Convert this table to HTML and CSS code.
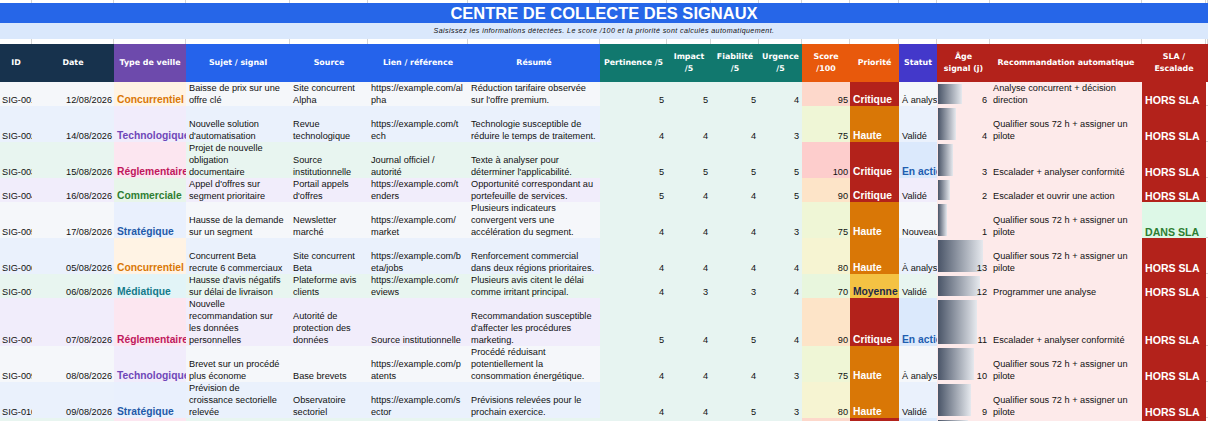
FILE: index.html
```html
<!DOCTYPE html>
<html lang="fr">
<head>
<meta charset="utf-8">
<title>Centre de collecte des signaux</title>
<link rel="stylesheet" href="styles.css">
</head>
<body>
<div class="sheet">
  <div class="row strip top">
    <div class="gl"></div><div class="gl"></div><div class="gl"></div><div class="gl"></div><div class="gl"></div><div class="gl"></div><div class="gl"></div><div class="gl"></div><div class="gl"></div><div class="gl"></div><div class="gl"></div><div class="gl"></div><div class="gl"></div><div class="gl"></div><div class="gl"></div><div class="gl"></div><div class="gl"></div><div class="gl"></div>
  </div>
  <div class="title">CENTRE DE COLLECTE DES SIGNAUX</div>
  <div class="subtitle">Saisissez les informations détectées. Le score /100 et la priorité sont calculés automatiquement.</div>
  <div class="row strip gap">
    <div class="gl"></div><div class="gl"></div><div class="gl"></div><div class="gl"></div><div class="gl"></div><div class="gl"></div><div class="gl"></div><div class="gl"></div><div class="gl"></div><div class="gl"></div><div class="gl"></div><div class="gl"></div><div class="gl"></div><div class="gl"></div><div class="gl"></div><div class="gl"></div><div class="gl"></div><div class="gl"></div>
  </div>

  <div class="row head">
    <div class="h h-navy">ID</div>
    <div class="h h-navy">Date</div>
    <div class="h h-purple">Type de veille</div>
    <div class="h h-blue">Sujet / signal</div>
    <div class="h h-blue">Source</div>
    <div class="h h-blue">Lien / référence</div>
    <div class="h h-blue">Résumé</div>
    <div class="h h-teal">Pertinence /5</div>
    <div class="h h-teal">Impact<br>/5</div>
    <div class="h h-teal">Fiabilité<br>/5</div>
    <div class="h h-teal">Urgence<br>/5</div>
    <div class="h h-orange">Score<br>/100</div>
    <div class="h h-orange">Priorité</div>
    <div class="h h-indigo">Statut</div>
    <div class="h h-red">Âge<br>signal (j)</div>
    <div class="h h-red">Recommandation automatique</div>
    <div class="h h-red">SLA /<br>Escalade</div>
    <div class="h h-red"></div>
  </div>

  <div class="row g h24">
    <div class="c rb id"><span>SIG-001</span></div>
    <div class="c rb r"><span>12/08/2026</span></div>
    <div class="c ty t-conc"><span>Concurrentiel</span></div>
    <div class="c rb"><span>Baisse de prix sur une<br>offre clé</span></div>
    <div class="c rb"><span>Site concurrent<br>Alpha</span></div>
    <div class="c rb"><span>https://example.com/al<br>pha</span></div>
    <div class="c rb"><span>Réduction tarifaire observée<br>sur l'offre premium.</span></div>
    <div class="c num"><span>5</span></div>
    <div class="c num"><span>5</span></div>
    <div class="c num"><span>5</span></div>
    <div class="c num"><span>4</span></div>
    <div class="c sc s95"><span>95</span></div>
    <div class="c pr p-crit"><span>Critique</span></div>
    <div class="c rb"><span>À analyser</span></div>
    <div class="c age" style="background-size:24px calc(100% - 4px)"><span>6</span></div>
    <div class="c rec"><span>Analyse concurrent + décision<br>direction</span></div>
    <div class="c sla hors"><span>HORS SLA</span></div>
    <div class="c fill"></div>
  </div>

  <div class="row b h36">
    <div class="c rb id"><span>SIG-002</span></div>
    <div class="c rb r"><span>14/08/2026</span></div>
    <div class="c ty t-tech"><span>Technologique</span></div>
    <div class="c rb"><span>Nouvelle solution<br>d'automatisation</span></div>
    <div class="c rb"><span>Revue<br>technologique</span></div>
    <div class="c rb"><span>https://example.com/t<br>ech</span></div>
    <div class="c rb"><span>Technologie susceptible de<br>réduire le temps de traitement.</span></div>
    <div class="c num"><span>4</span></div>
    <div class="c num"><span>4</span></div>
    <div class="c num"><span>4</span></div>
    <div class="c num"><span>3</span></div>
    <div class="c sc s75"><span>75</span></div>
    <div class="c pr p-haute"><span>Haute</span></div>
    <div class="c rb"><span>Validé</span></div>
    <div class="c age" style="background-size:18px calc(100% - 4px)"><span>4</span></div>
    <div class="c rec"><span>Qualifier sous 72 h + assigner un<br>pilote</span></div>
    <div class="c sla hors"><span>HORS SLA</span></div>
    <div class="c fill"></div>
  </div>

  <div class="row n h36">
    <div class="c rb id"><span>SIG-003</span></div>
    <div class="c rb r"><span>15/08/2026</span></div>
    <div class="c ty t-reg"><span>Réglementaire</span></div>
    <div class="c rb"><span>Projet de nouvelle<br>obligation<br>documentaire</span></div>
    <div class="c rb"><span>Source<br>institutionnelle</span></div>
    <div class="c rb"><span>Journal officiel /<br>autorité</span></div>
    <div class="c rb"><span>Texte à analyser pour<br>déterminer l'applicabilité.</span></div>
    <div class="c num"><span>5</span></div>
    <div class="c num"><span>5</span></div>
    <div class="c num"><span>5</span></div>
    <div class="c num"><span>5</span></div>
    <div class="c sc s100"><span>100</span></div>
    <div class="c pr p-crit"><span>Critique</span></div>
    <div class="c st-act"><span>En action</span></div>
    <div class="c age" style="background-size:15px calc(100% - 4px)"><span>3</span></div>
    <div class="c rec"><span>Escalader + analyser conformité</span></div>
    <div class="c sla hors"><span>HORS SLA</span></div>
    <div class="c fill"></div>
  </div>

  <div class="row p h24">
    <div class="c rb id"><span>SIG-004</span></div>
    <div class="c rb r"><span>16/08/2026</span></div>
    <div class="c ty t-com"><span>Commerciale</span></div>
    <div class="c rb"><span>Appel d'offres sur<br>segment prioritaire</span></div>
    <div class="c rb"><span>Portail appels<br>d'offres</span></div>
    <div class="c rb"><span>https://example.com/t<br>enders</span></div>
    <div class="c rb"><span>Opportunité correspondant au<br>portefeuille de services.</span></div>
    <div class="c num"><span>5</span></div>
    <div class="c num"><span>4</span></div>
    <div class="c num"><span>4</span></div>
    <div class="c num"><span>5</span></div>
    <div class="c sc s90"><span>90</span></div>
    <div class="c pr p-crit"><span>Critique</span></div>
    <div class="c rb"><span>Validé</span></div>
    <div class="c age" style="background-size:12px calc(100% - 4px)"><span>2</span></div>
    <div class="c rec"><span>Escalader et ouvrir une action</span></div>
    <div class="c sla hors"><span>HORS SLA</span></div>
    <div class="c fill"></div>
  </div>

  <div class="row g h36">
    <div class="c rb id"><span>SIG-005</span></div>
    <div class="c rb r"><span>17/08/2026</span></div>
    <div class="c ty t-str"><span>Stratégique</span></div>
    <div class="c rb"><span>Hausse de la demande<br>sur un segment</span></div>
    <div class="c rb"><span>Newsletter<br>marché</span></div>
    <div class="c rb"><span>https://example.com/<br>market</span></div>
    <div class="c rb"><span>Plusieurs indicateurs<br>convergent vers une<br>accélération du segment.</span></div>
    <div class="c num"><span>4</span></div>
    <div class="c num"><span>4</span></div>
    <div class="c num"><span>4</span></div>
    <div class="c num"><span>3</span></div>
    <div class="c sc s75"><span>75</span></div>
    <div class="c pr p-haute"><span>Haute</span></div>
    <div class="c rb"><span>Nouveau</span></div>
    <div class="c age" style="background-size:9px calc(100% - 4px)"><span>1</span></div>
    <div class="c rec"><span>Qualifier sous 72 h + assigner un<br>pilote</span></div>
    <div class="c sla dans"><span>DANS SLA</span></div>
    <div class="c fill"></div>
  </div>

  <div class="row b h36">
    <div class="c rb id"><span>SIG-006</span></div>
    <div class="c rb r"><span>05/08/2026</span></div>
    <div class="c ty t-conc"><span>Concurrentiel</span></div>
    <div class="c rb"><span>Concurrent Beta<br>recrute 6 commerciaux</span></div>
    <div class="c rb"><span>Site concurrent<br>Beta</span></div>
    <div class="c rb"><span>https://example.com/b<br>eta/jobs</span></div>
    <div class="c rb"><span>Renforcement commercial<br>dans deux régions prioritaires.</span></div>
    <div class="c num"><span>4</span></div>
    <div class="c num"><span>4</span></div>
    <div class="c num"><span>4</span></div>
    <div class="c num"><span>4</span></div>
    <div class="c sc s80"><span>80</span></div>
    <div class="c pr p-haute"><span>Haute</span></div>
    <div class="c rb"><span>À analyser</span></div>
    <div class="c age" style="background-size:45px calc(100% - 4px)"><span>13</span></div>
    <div class="c rec"><span>Qualifier sous 72 h + assigner un<br>pilote</span></div>
    <div class="c sla hors"><span>HORS SLA</span></div>
    <div class="c fill"></div>
  </div>

  <div class="row n h24">
    <div class="c rb id"><span>SIG-007</span></div>
    <div class="c rb r"><span>06/08/2026</span></div>
    <div class="c ty t-med"><span>Médiatique</span></div>
    <div class="c rb"><span>Hausse d'avis négatifs<br>sur délai de livraison</span></div>
    <div class="c rb"><span>Plateforme avis<br>clients</span></div>
    <div class="c rb"><span>https://example.com/r<br>eviews</span></div>
    <div class="c rb"><span>Plusieurs avis citent le délai<br>comme irritant principal.</span></div>
    <div class="c num"><span>4</span></div>
    <div class="c num"><span>3</span></div>
    <div class="c num"><span>3</span></div>
    <div class="c num"><span>4</span></div>
    <div class="c sc s70"><span>70</span></div>
    <div class="c pr p-moy"><span>Moyenne</span></div>
    <div class="c rb"><span>Validé</span></div>
    <div class="c age" style="background-size:42px calc(100% - 4px)"><span>12</span></div>
    <div class="c rec"><span>Programmer une analyse</span></div>
    <div class="c sla hors"><span>HORS SLA</span></div>
    <div class="c fill"></div>
  </div>

  <div class="row p h48">
    <div class="c rb id"><span>SIG-008</span></div>
    <div class="c rb r"><span>07/08/2026</span></div>
    <div class="c ty t-reg"><span>Réglementaire</span></div>
    <div class="c rb"><span>Nouvelle<br>recommandation sur<br>les données<br>personnelles</span></div>
    <div class="c rb"><span>Autorité de<br>protection des<br>données</span></div>
    <div class="c rb"><span>Source institutionnelle</span></div>
    <div class="c rb"><span>Recommandation susceptible<br>d'affecter les procédures<br>marketing.</span></div>
    <div class="c num"><span>5</span></div>
    <div class="c num"><span>4</span></div>
    <div class="c num"><span>5</span></div>
    <div class="c num"><span>4</span></div>
    <div class="c sc s90"><span>90</span></div>
    <div class="c pr p-crit"><span>Critique</span></div>
    <div class="c st-act"><span>En action</span></div>
    <div class="c age" style="background-size:39px calc(100% - 4px)"><span>11</span></div>
    <div class="c rec"><span>Escalader + analyser conformité</span></div>
    <div class="c sla hors"><span>HORS SLA</span></div>
    <div class="c fill"></div>
  </div>

  <div class="row g h36">
    <div class="c rb id"><span>SIG-009</span></div>
    <div class="c rb r"><span>08/08/2026</span></div>
    <div class="c ty t-tech"><span>Technologique</span></div>
    <div class="c rb"><span>Brevet sur un procédé<br>plus économe</span></div>
    <div class="c rb"><span>Base brevets</span></div>
    <div class="c rb"><span>https://example.com/p<br>atents</span></div>
    <div class="c rb"><span>Procédé réduisant<br>potentiellement la<br>consommation énergétique.</span></div>
    <div class="c num"><span>4</span></div>
    <div class="c num"><span>4</span></div>
    <div class="c num"><span>4</span></div>
    <div class="c num"><span>3</span></div>
    <div class="c sc s75"><span>75</span></div>
    <div class="c pr p-haute"><span>Haute</span></div>
    <div class="c rb"><span>À analyser</span></div>
    <div class="c age" style="background-size:36px calc(100% - 4px)"><span>10</span></div>
    <div class="c rec"><span>Qualifier sous 72 h + assigner un<br>pilote</span></div>
    <div class="c sla hors"><span>HORS SLA</span></div>
    <div class="c fill"></div>
  </div>

  <div class="row b h36">
    <div class="c rb id"><span>SIG-010</span></div>
    <div class="c rb r"><span>09/08/2026</span></div>
    <div class="c ty t-str"><span>Stratégique</span></div>
    <div class="c rb"><span>Prévision de<br>croissance sectorielle<br>relevée</span></div>
    <div class="c rb"><span>Observatoire<br>sectoriel</span></div>
    <div class="c rb"><span>https://example.com/s<br>ector</span></div>
    <div class="c rb"><span>Prévisions relevées pour le<br>prochain exercice.</span></div>
    <div class="c num"><span>4</span></div>
    <div class="c num"><span>4</span></div>
    <div class="c num"><span>5</span></div>
    <div class="c num"><span>3</span></div>
    <div class="c sc s80"><span>80</span></div>
    <div class="c pr p-haute"><span>Haute</span></div>
    <div class="c rb"><span>Validé</span></div>
    <div class="c age" style="background-size:33px calc(100% - 4px)"><span>9</span></div>
    <div class="c rec"><span>Qualifier sous 72 h + assigner un<br>pilote</span></div>
    <div class="c sla hors"><span>HORS SLA</span></div>
    <div class="c fill"></div>
  </div>

  <div class="row n h36">
    <div class="c rb id"><span>SIG-011</span></div>
    <div class="c rb r"><span>10/08/2026</span></div>
    <div class="c ty t-reg"><span>Réglementaire</span></div>
    <div class="c rb"><span>Consultation publique<br>sur un projet de norme</span></div>
    <div class="c rb"><span>Source<br>institutionnelle</span></div>
    <div class="c rb"><span>Journal officiel /<br>autorité</span></div>
    <div class="c rb"><span>Norme susceptible d'impacter<br>les offres existantes.</span></div>
    <div class="c num"><span>5</span></div>
    <div class="c num"><span>5</span></div>
    <div class="c num"><span>4</span></div>
    <div class="c num"><span>5</span></div>
    <div class="c sc s95"><span>95</span></div>
    <div class="c pr p-crit"><span>Critique</span></div>
    <div class="c st-act"><span>En action</span></div>
    <div class="c age" style="background-size:30px calc(100% - 4px)"><span>8</span></div>
    <div class="c rec"><span>Escalader + analyser conformité</span></div>
    <div class="c sla hors"><span>HORS SLA</span></div>
    <div class="c fill"></div>
  </div>
</div>
</body>
</html>
```

FILE: styles.css
```css
html, body {
  margin: 0;
  padding: 0;
  background: #ffffff;
  overflow: hidden;
}

body {
  font-family: "Liberation Sans", Arial, sans-serif;
  font-size: 9.2px;
  color: #111111;
}

.sheet {
  display: grid;
  grid-template-columns: 32px 82px 72px 104px 78px 100px 132px 67px 44px 48px 43px 48px 49px 38px 53px 152px 64px 2px;
  width: 1208px;
}

.row {
  display: contents;
}

/* spreadsheet gridline strips */
.strip .gl {
  box-sizing: border-box;
  border-right: 1px solid #d4d4d4;
  background: #ffffff;
}
.top .gl { height: 3px; }
.gap .gl { height: 5px; }

.title {
  grid-column: 1 / -1;
  height: 20px;
  background: #2666e8;
  color: #ffffff;
  font-weight: bold;
  font-size: 16.5px;
  line-height: 21px;
  text-align: center;
}

.subtitle {
  grid-column: 1 / -1;
  height: 16px;
  background: #dae8fc;
  color: #111111;
  font-style: italic;
  font-size: 7.1px;
  letter-spacing: 0.4px;
  line-height: 16px;
  text-align: center;
}

/* header */
.h {
  height: 38px;
  display: flex;
  align-items: center;
  justify-content: center;
  text-align: center;
  font-family: "DejaVu Sans", Verdana, sans-serif;
  font-weight: bold;
  font-size: 7.9px;
  line-height: 12px;
  color: #ffffff;
  white-space: nowrap;
  overflow: hidden;
}
.h-navy { background: #17324d; }
.h-purple { background: #6d4aac; }
.h-blue { background: #2563eb; }
.h-teal { background: #11786e; }
.h-orange { background: #e8590c; }
.h-indigo { background: #4338ca; }
.h-red { background: #b3221b; }

/* row heights (fixed, as in the sheet) */
.h24 > .c { height: 24px; }
.h36 > .c { height: 36px; }
.h48 > .c { height: 48px; }

/* data cells */
.c {
  display: flex;
  align-items: flex-end;
  padding: 0 3px;
  overflow: hidden;
  white-space: nowrap;
  line-height: 12px;
  min-width: 0;
}
.c span { display: block; }
.c.id { padding-left: 2px; }
.c.r { justify-content: flex-end; padding-right: 2px; }

.g > .rb { background: #f5f7fa; }
.b > .rb { background: #eaf1fc; }
.n > .rb { background: #e8f5f0; }
.p > .rb { background: #f1edfb; }

.ty {
  font-weight: bold;
  font-size: 10.3px;
}
.t-conc { background: #fff3e4; color: #d97706; }
.t-tech { background: #f1ecfb; color: #6f47b8; }
.t-reg { background: #fce6f0; color: #c0185c; }
.t-com { background: #e8f5ea; color: #2e7d32; }
.t-str { background: #e9f0fd; color: #1f5aa8; }
.t-med { background: #e2f4f7; color: #137a8a; }

.num {
  background: #e7f4f1;
  justify-content: flex-end;
}

.sc { justify-content: flex-end; padding-right: 2px; }
.s100 { background: #fdcdcc; }
.s95 { background: #fdd8cb; }
.s90 { background: #fde4c8; }
.s80 { background: #f6f4d2; }
.s75 { background: #eff6d6; }
.s70 { background: #e8f6dd; }

.pr {
  font-weight: bold;
  font-size: 10.3px;
  color: #ffffff;
}
.p-crit { background: #b3221b; }
.p-haute { background: #d97706; }
.p-moy { background: #f4c243; color: #1b2a4a; }

.st-act {
  background: #dbe9fc;
  color: #1f5eb0;
  font-weight: bold;
  font-size: 10.3px;
}

.age {
  justify-content: flex-end;
  background-color: #fdeaea;
  background-image: linear-gradient(to right, #4a5568, #e6e9ee);
  background-repeat: no-repeat;
  background-position: 1px 2px;
}

.rec { background: #fdeaea; }

.sla {
  font-weight: bold;
  font-size: 10.6px;
}
.hors { background: #b3221b; color: #ffffff; }
.dans { background: #ddf8e7; color: #2e7d32; }

.fill {
  background: #ffffff;
  box-sizing: border-box;
  border-bottom: 1px solid #d4d4d4;
  padding: 0;
}
```
